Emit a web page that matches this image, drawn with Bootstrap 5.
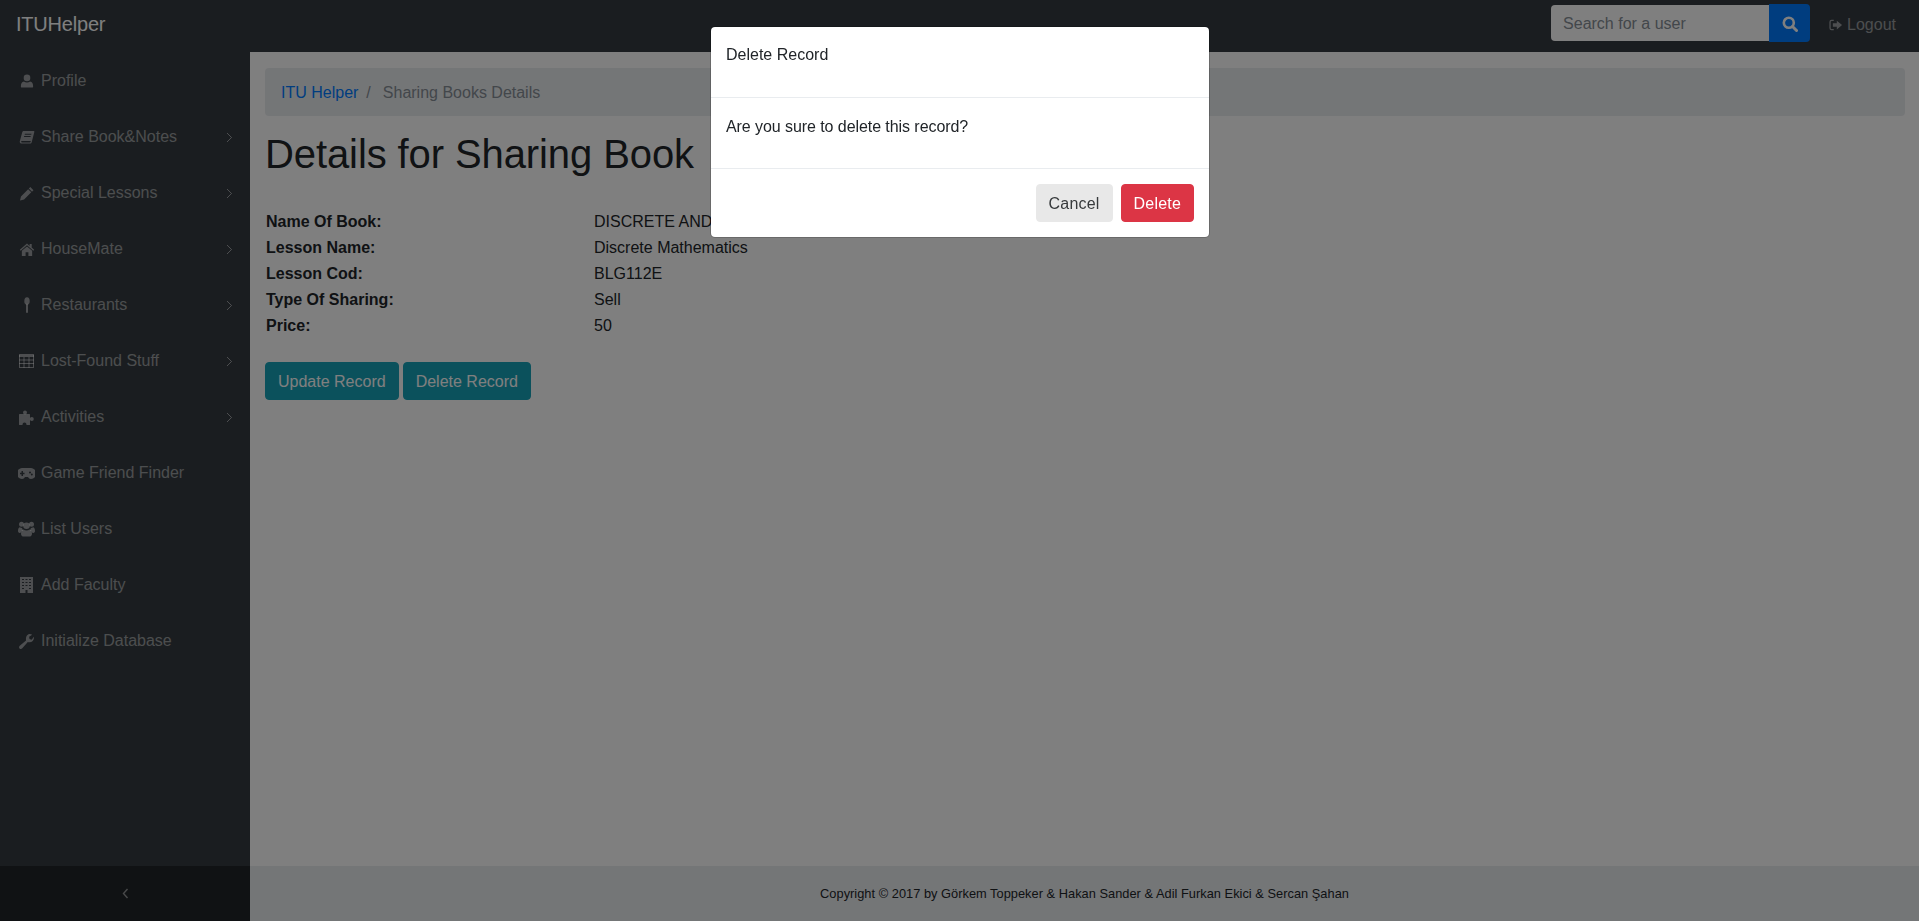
<!DOCTYPE html>
<html lang="en">
<head>
    <meta charset="UTF-8">
    <meta name="viewport" content="width=device-width, initial-scale=1.0">
    <title>ITUHelper</title>
    <link href="https://cdn.jsdelivr.net/npm/bootstrap@5.3.0/dist/css/bootstrap.min.css" rel="stylesheet">
    <style>
        body { font-family: "Liberation Sans", Arial, sans-serif; font-size: 16px; color: #212529; background: #fff; overflow: hidden; }
        .app-shell { height: 921px; }
        .top-bar { background: #343a40; height: 52px; padding: 0 15px 0 16px; flex: none; }
        .top-bar .navbar-brand { color: #fff; font-size: 20px; padding: 0; margin: 0; line-height: 30px; margin-top: -4px; letter-spacing: -.2px; }
        .search-input { width: 218px; height: 36px; border: 0; border-radius: 4px 0 0 4px; padding: 7px 12px 5px; font-size: 16px; color: #495057; background: #fff; margin-top: -6px; }
        .search-input::placeholder { color: #868e96; opacity: 1; }
        .search-btn { width: 41px; height: 38px; padding: 0; background: #007bff; border: 0; border-radius: 0 4px 4px 0; color: #fff; margin-top: -6px; }
        .logout-link { color: rgba(255,255,255,.5); padding: 8px; margin-left: 10px; text-decoration: none; margin-top: -3px; }
        .side-col { width: 250px; flex: none; background: #343a40; }
        .side-link { height: 56px; padding: 2px 16px 0; color: rgba(255,255,255,.5); text-decoration: none; }
        .side-icon { width: 21px; flex: none; }
        .side-caret { margin-left: auto; margin-right: 1px; }
        .side-toggle { height: 55px; background: #212529; color: rgba(255,255,255,.5); }
        .main-col { min-width: 0; }
        .page-body { padding: 16px 14px 0 15px; }
        .crumbs { background: #e9ecef; border-radius: 4px; padding: 13px 16px 11px; margin-bottom: 16px; }
        .crumbs a { color: #007bff; text-decoration: none; }
        .crumbs .breadcrumb-item.active { color: #868e96; }
        .crumbs .breadcrumb-item.active::before { color: #868e96; padding-right: 12px; }
        .page-title { font-size: 40px; line-height: 48px; font-weight: 400; margin-top: -2px; margin-bottom: 30px; letter-spacing: -.1px; }
        .detail-row { height: 26px; line-height: 28px; padding-left: 1px; }
        .detail-label { width: 328px; flex: none; font-weight: 700; }
        .teal-btn { background: #17a2b8; border-color: #17a2b8; color: #fff; height: 38px; border-radius: 4px; padding-top: 7px; }
        .teal-btn:hover { background: #17a2b8; border-color: #17a2b8; color: #fff; }
        .action-row { margin-top: 24px; gap: 4px; }
        .page-foot { height: 55px; background: #e9ecef; font-size: 12.8px; flex: none; padding-top: 1px; letter-spacing: .03px; }
        .modal.delete-wrap { padding-left: 1px; }
        .modal-dialog.delete-dialog { margin-top: 26px; }
        .delete-dialog .modal-content { border-radius: 5px; }
        .delete-dialog .modal-header { padding: 16px 15px 14px; display: block; border-bottom: 1px solid #e9ecef; }
        .delete-dialog .modal-body { padding: 17px 15px 13px; display: block; }
        .delete-dialog .modal-footer { padding: 15px; border-top: 1px solid #e9ecef; gap: 8px; }
        .delete-dialog .modal-footer .btn { margin: 0; height: 38px; border-radius: 4px; padding-top: 7px; letter-spacing: .2px; }
        .delete-dialog p { margin-bottom: 16px; }
        .delete-dialog .modal-body p { letter-spacing: -.07px; }
        .cancel-btn { background: #e8e8e8; border-color: #e8e8e8; color: #373a3c; }
        .confirm-btn { background: #dc3545; border-color: #dc3545; color: #fff; }
    </style>
</head>
<body>
<div class="app-shell d-flex flex-column">
    <nav class="top-bar d-flex align-items-center">
        <a class="navbar-brand" href="#">ITUHelper</a>
        <form class="d-flex align-items-center ms-auto">
            <input class="search-input" type="text" placeholder="Search for a user">
            <button class="search-btn" type="button">
                <svg width="16" height="16" viewBox="0 0 16 16" fill="none" stroke="currentColor"><circle cx="6.800" cy="6.800" r="5" stroke-width="2.600"/><path d="M10.500 10.500l4 4" stroke-width="3" stroke-linecap="round"/></svg>
            </button>
        </form>
        <a class="logout-link d-flex align-items-center gap-1" href="#">
            <svg width="15" height="14" viewBox="0 0 16 16" fill="currentColor"><path d="M6 2H3.500A2.500 2.500 0 0 0 1 4.500v7A2.500 2.500 0 0 0 3.500 14H6v-1.500H3.500a1 1 0 0 1-1-1v-7a1 1 0 0 1 1-1H6z"/><path d="M9.500 3l6 5-6 5v-3H5V6h4.500z"/></svg>
            Logout
        </a>
    </nav>
    <div class="d-flex flex-grow-1" style="min-height:0">
        <aside class="side-col d-flex flex-column">
            <div class="flex-grow-1">
                <a class="side-link d-flex align-items-center gap-1" href="#">
                    <span class="side-icon d-flex justify-content-center"><svg width="14" height="16" viewBox="0 0 16 16" fill="currentColor"><circle cx="8" cy="4.500" r="3.800"/><path d="M2 15.500c-.8 0-1-.6-1-1.500 0-3 1-5.500 3.500-5.500 1 .9 2.200 1.300 3.500 1.300s2.500-.4 3.500-1.300C14 8.500 15 11 15 14c0 .9-.2 1.500-1 1.500z"/></svg></span>
                    Profile
                </a>
                <a class="side-link d-flex align-items-center gap-1" href="#">
                    <span class="side-icon d-flex justify-content-center"><svg width="16" height="15" viewBox="0 0 16 16" fill="currentColor"><path fill-rule="evenodd" d="M4.500 1H15c.7 0 1 .5.800 1.200L13 13c-.2.800-.8 1.500-1.800 1.500H2.500C1 14.500 0 13.500.3 12L3 2.200C3.200 1.500 3.800 1 4.500 1zM5.800 4l-.3 1h7l.3-1zM5 6.500l-.3 1h7l.3-1zM2.600 11.800c-.5 0-.9.400-.8.900.1.300.4.500.8.500h8.600c.3 0 .5-.2.600-.5l.2-.9z"/></svg></span>
                    Share Book&amp;Notes
                    <svg class="side-caret" width="7" height="11" viewBox="0 0 7 11" fill="none" stroke="currentColor"><path d="M1 1l4.500 4.500L1 10"/></svg>
                </a>
                <a class="side-link d-flex align-items-center gap-1" href="#">
                    <span class="side-icon d-flex justify-content-center"><svg width="14" height="15" viewBox="0 0 16 16" fill="currentColor"><path d="M11.800.6l3.600 3.600-1.700 1.700-3.600-3.600zM9.300 3.100l3.600 3.600-8.200 8.200L0 16l1.100-4.700z"/></svg></span>
                    Special Lessons
                    <svg class="side-caret" width="7" height="11" viewBox="0 0 7 11" fill="none" stroke="currentColor"><path d="M1 1l4.500 4.500L1 10"/></svg>
                </a>
                <a class="side-link d-flex align-items-center gap-1" href="#">
                    <span class="side-icon d-flex justify-content-center"><svg width="16" height="15" viewBox="0 0 16 16" fill="currentColor"><path d="M8 1.500L.3 8.200l1 1.100L8 3.500l6.700 5.800 1-1.100-2.700-2.400V2h-2.200v2.200z"/><path d="M8 4.700l-5.500 4.700V15h4V11h3v4h4V9.400z"/></svg></span>
                    HouseMate
                    <svg class="side-caret" width="7" height="11" viewBox="0 0 7 11" fill="none" stroke="currentColor"><path d="M1 1l4.500 4.500L1 10"/></svg>
                </a>
                <a class="side-link d-flex align-items-center gap-1" href="#">
                    <span class="side-icon d-flex justify-content-center"><svg width="6" height="16" viewBox="0 0 6 16" fill="currentColor"><ellipse cx="3" cy="4" rx="2.700" ry="3.800"/><rect x="2" y="6.500" width="2" height="9.500" rx="1"/></svg></span>
                    Restaurants
                    <svg class="side-caret" width="7" height="11" viewBox="0 0 7 11" fill="none" stroke="currentColor"><path d="M1 1l4.500 4.500L1 10"/></svg>
                </a>
                <a class="side-link d-flex align-items-center gap-1" href="#">
                    <span class="side-icon d-flex justify-content-center"><svg width="15" height="14" viewBox="0 0 15 14" fill="none" stroke="currentColor"><rect x=".5" y=".5" width="14" height="13"/><path stroke-width="2" d="M0 2h15"/><path d="M0 6h15M0 9.500h15M5 3v11M10 3v11"/></svg></span>
                    Lost-Found Stuff
                    <svg class="side-caret" width="7" height="11" viewBox="0 0 7 11" fill="none" stroke="currentColor"><path d="M1 1l4.500 4.500L1 10"/></svg>
                </a>
                <a class="side-link d-flex align-items-center gap-1" href="#">
                    <span class="side-icon d-flex justify-content-center"><svg width="15" height="15" viewBox="0 0 15 15" fill="currentColor"><circle cx="6" cy="2.500" r="2"/><rect x="0" y="4" width="11" height="11" rx=".5"/><circle cx="12.800" cy="9" r="2"/><circle cx="5.500" cy="14.500" r="2" fill="#343a40"/></svg></span>
                    Activities
                    <svg class="side-caret" width="7" height="11" viewBox="0 0 7 11" fill="none" stroke="currentColor"><path d="M1 1l4.500 4.500L1 10"/></svg>
                </a>
                <a class="side-link d-flex align-items-center gap-1" href="#">
                    <span class="side-icon d-flex justify-content-center"><svg width="17" height="11" viewBox="0 0 17 11" fill="currentColor"><path fill-rule="evenodd" d="M4.500 0h8a5 5 0 0 1 .5 11c-1.500 0-2.300-.9-3-2H7c-.7 1.100-1.500 2-3 2a5 5 0 0 1 .5-11zM3.500 3v1.700H2v1.500h1.500V8H5V6.200h1.500V4.700H5V3zM12 3.500a1 1 0 1 0 0 2 1 1 0 0 0 0-2zM13.800 5.500a1 1 0 1 0 0 2 1 1 0 0 0 0-2z"/></svg></span>
                    Game Friend Finder
                </a>
                <a class="side-link d-flex align-items-center gap-1" href="#">
                    <span class="side-icon d-flex justify-content-center"><svg width="17" height="16" viewBox="0 0 17 16" fill="currentColor"><circle cx="3.500" cy="3.300" r="2.500"/><circle cx="13.500" cy="3.300" r="2.500"/><circle cx="8.500" cy="4.800" r="3.300"/><path d="M0 10c0-2.500.8-3.800 2-3.800.7.600 1.300.8 2.200.6-.1 1.100.4 2 1 2.800C3.500 10 2.800 11 2.500 12 1 12 0 11.500 0 10zM17 10c0-2.500-.8-3.800-2-3.800-.7.600-1.300.8-2.200.6.100 1.100-.4 2-1 2.800 1.700.4 2.400 1.400 2.700 2.400 1.500 0 2.500-.5 2.500-2z"/><path d="M5.500 8.500c1.600 1.300 4.400 1.300 6 0 1.500 0 2.500 1.500 2.500 4.300 0 1.300-.8 2.700-2 2.700H5c-1.200 0-2-1.400-2-2.700 0-2.800 1-4.300 2.500-4.300z"/></svg></span>
                    List Users
                </a>
                <a class="side-link d-flex align-items-center gap-1" href="#">
                    <span class="side-icon d-flex justify-content-center"><svg width="13" height="16" viewBox="0 0 13 16" fill="currentColor"><path fill-rule="evenodd" d="M0 0h13v16H0zM2 2v1h2V2zM5.500 2v1h2V2zM9 2v1h2V2zM2 5v1h2V5zM5.500 5v1h2V5zM9 5v1h2V5zM2 8v1h2V8zM5.500 8v1h2V8zM9 8v1h2V8zM2 11v1h2v-1zM9 11v1h2v-1zM5.500 13v3h2v-3z"/></svg></span>
                    Add Faculty
                </a>
                <a class="side-link d-flex align-items-center gap-1" href="#">
                    <span class="side-icon d-flex justify-content-center"><svg width="15" height="15" viewBox="0 0 16 16" fill="currentColor"><path d="M11.500 0c1 0 1.800.2 2.500.7L10.800 3l.4 2.300 2.200.7L16 3c.2 2.800-1.400 5.800-5 5.800-.6 0-1.100-.1-1.600-.3L3.500 15.200c-.8.900-2.100 1-2.900.2-.8-.8-.7-2 .2-2.800L7.500 6.800C7 3.400 8.500 0 11.500 0z"/></svg></span>
                    Initialize Database
                </a>
            </div>
            <div class="side-toggle d-flex align-items-center justify-content-center">
                <svg width="7" height="11" viewBox="0 0 7 11" fill="none" stroke="currentColor" stroke-width="1.400"><path d="M5.500 1L1.500 5.500 5.500 10"/></svg>
            </div>
        </aside>
        <div class="main-col flex-grow-1 d-flex flex-column">
            <div class="page-body flex-grow-1">
                <ol class="breadcrumb crumbs">
                    <li class="breadcrumb-item"><a href="#">ITU Helper</a></li>
                    <li class="breadcrumb-item active">Sharing Books Details</li>
                </ol>
                <h1 class="page-title">Details for Sharing Book</h1>
                <div class="detail-row d-flex"><div class="detail-label">Name Of Book:</div><div>DISCRETE AND COMBINATORIAL MATHEMATICS</div></div>
                <div class="detail-row d-flex"><div class="detail-label">Lesson Name:</div><div>Discrete Mathematics</div></div>
                <div class="detail-row d-flex"><div class="detail-label">Lesson Cod:</div><div>BLG112E</div></div>
                <div class="detail-row d-flex"><div class="detail-label">Type Of Sharing:</div><div>Sell</div></div>
                <div class="detail-row d-flex"><div class="detail-label">Price:</div><div>50</div></div>
                <div class="action-row d-flex">
                    <button class="btn teal-btn" type="button">Update Record</button>
                    <button class="btn teal-btn" type="button">Delete Record</button>
                </div>
            </div>
            <footer class="page-foot d-flex align-items-center justify-content-center">Copyright © 2017 by Görkem Toppeker &amp; Hakan Sander &amp; Adil Furkan Ekici &amp; Sercan Şahan</footer>
        </div>
    </div>
</div>

<div class="modal-backdrop show"></div>
<div class="modal delete-wrap show d-block" tabindex="-1" role="dialog">
    <div class="modal-dialog delete-dialog">
        <div class="modal-content">
            <div class="modal-header"><p>Delete Record</p></div>
            <div class="modal-body"><p>Are you sure to delete this record?</p></div>
            <div class="modal-footer">
                <button class="btn cancel-btn" type="button">Cancel</button>
                <button class="btn confirm-btn" type="button">Delete</button>
            </div>
        </div>
    </div>
</div>
<script src="https://cdn.jsdelivr.net/npm/bootstrap@5.3.0/dist/js/bootstrap.bundle.min.js"></script>
</body>
</html>
